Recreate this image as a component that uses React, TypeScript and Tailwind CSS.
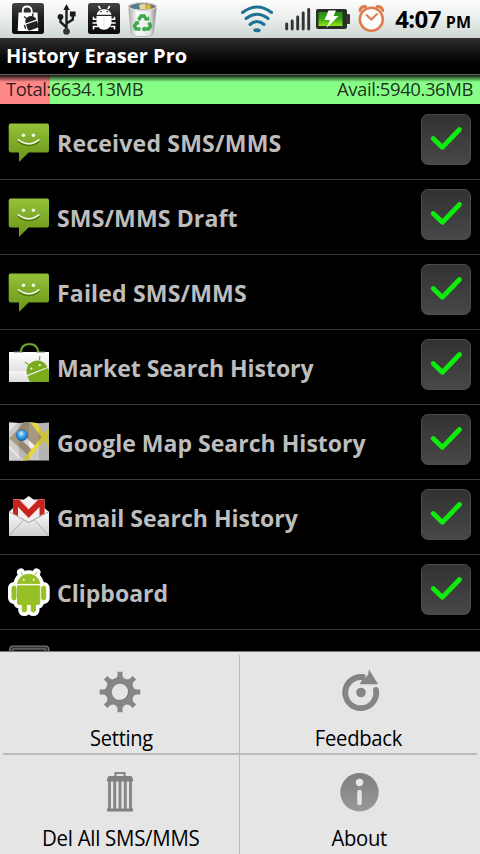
import { useState } from "react";
import type { ReactNode } from "react";
import clsx from "clsx";

const TOTAL = "6634.13MB";
const AVAIL = "5940.36MB";
const USED_PERCENT = 10.4;

const MessageIcon = () => (
  <svg viewBox="0 0 48 48" className="size-12 overflow-visible">
    <defs>
      <linearGradient id="bubble" x1="0" y1="0" x2="0" y2="1">
        <stop offset="0" stopColor="#93c23a" />
        <stop offset="1" stopColor="#6a9416" />
      </linearGradient>
    </defs>
    <path
      d="M6 4.5H42Q44 4.5 44 6.5V31.5Q44 33.5 42 33.5H23.5L14 43V33.5H6Q3.7 33.5 3.7 31.5V6.5Q3.7 4.5 6 4.5Z"
      fill="url(#bubble)"
    />
    <path d="M13 22.2Q24 31 34.5 22.2" fill="none" stroke="#4f7510" strokeWidth="1.5" />
    <path d="M13.5 20.8Q24 28.6 33.8 20.8" fill="none" stroke="#f4f7ea" strokeWidth="1.6" strokeLinecap="round" />
    <circle cx="18.5" cy="16.3" r="1.7" fill="#f4fae4" />
    <circle cx="28.4" cy="16.3" r="1.7" fill="#f4fae4" />
  </svg>
);

const MarketIcon = () => (
  <svg viewBox="0 0 48 48" className="size-12 overflow-visible">
    <defs>
      <linearGradient id="bag" x1="0" y1="0" x2="0" y2="1">
        <stop offset="0" stopColor="#fff" />
        <stop offset="0.62" stopColor="#e3e3e6" />
        <stop offset="0.64" stopColor="#f4f4f4" />
        <stop offset="1" stopColor="#dcdcdc" />
      </linearGradient>
      <clipPath id="bag-clip">
        <path d="M4 8H44V38H4Z" />
      </clipPath>
    </defs>
    <path d="M15.5 8C16.5 2 20 0 24.5 0S32.5 2 33.5 8" fill="none" stroke="#3c6a12" strokeWidth="2.4" />
    <path d="M15.5 8C16.5 2 20 0 24.5 0S32.5 2 33.5 8" fill="none" stroke="#86b93a" strokeWidth="1.1" />
    <path d="M4 8H44V38H4Z" fill="url(#bag)" />
    <path d="M9 8h9M31 8h9" stroke="#777" strokeWidth="1" />
    <g clipPath="url(#bag-clip)">
      <g transform="translate(32.3 27) rotate(-22)" fill="#79ab1c">
        <path d="M-11 0A11 10.5 0 0 1 11 0Z" />
        <path d="M-6-9L-8-13M6-9L8-13" stroke="#79ab1c" strokeWidth="1.2" />
        <path d="M-11 1.3H11V20H-11Z" />
        <rect x="12.2" y="1.5" width="4" height="12" rx="2" />
        <circle cx="-4.5" cy="-4.5" r="1" fill="#fff" />
        <circle cx="4.5" cy="-4.5" r="1" fill="#fff" />
      </g>
    </g>
  </svg>
);

const MapIcon = () => (
  <svg viewBox="0 0 48 48" className="size-12">
    <defs>
      <clipPath id="map-clip">
        <path d="M4 3.5L14 4L24 3.2L34 4.2L44 3.5V41.5H4Z" />
      </clipPath>
      <radialGradient id="pin" cx="0.45" cy="0.35" r="0.65">
        <stop offset="0" stopColor="#d6f2ff" />
        <stop offset="0.4" stopColor="#4fb2f0" />
        <stop offset="1" stopColor="#0a62b4" />
      </radialGradient>
    </defs>
    <g clipPath="url(#map-clip)">
      <path d="M4 3H44V42H4Z" fill="#cbc9c7" />
      <path d="M4 20L19 3H27L38 18L23 36L4 19Z" fill="#a8987f" />
      <path d="M4 22L21 38L17 42H4Z" fill="#d2d0ce" />
      <path d="M4 13L13 3H4Z" fill="#e2e2e2" />
      <path d="M19 20L31 31" stroke="#f0efec" strokeWidth="5" />
      <path d="M27 2L46 27M46 10L19 43" stroke="#e6d838" strokeWidth="4" fill="none" />
      <path d="M4 28L18 42" stroke="#e8e8e6" strokeWidth="2" />
      <path d="M14 3H24V42H14ZM34 3H44V42H34Z" fill="#000" opacity="0.1" />
    </g>
    <circle cx="16.8" cy="16.3" r="5.5" fill="url(#pin)" stroke="#1167b1" strokeWidth="0.7" />
  </svg>
);

const GmailIcon = () => (
  <svg viewBox="0 0 48 48" className="size-12">
    <defs>
      <linearGradient id="envelope" x1="0" y1="0" x2="0" y2="1">
        <stop offset="0" stopColor="#fafafa" />
        <stop offset="1" stopColor="#cfcfcf" />
      </linearGradient>
    </defs>
    <path d="M4 18L8 14V5.5H19L23.7 2L28.5 5.5H39.5V14L44 18V30H4Z" fill="#f3f0f0" />
    <path d="M4 17.5L23.7 28L44 17.5V42H4Z" fill="url(#envelope)" />
    <path d="M4.5 41.5L18.5 26M43.5 41.5L29.5 26" stroke="#a9a9a9" strokeWidth="0.9" />
    <path d="M4.5 18L23.7 28.5L43.5 18" fill="none" stroke="#999" strokeWidth="0.9" />
    <path d="M8 19.5V5.5H14L23.7 15.5L33.5 5.5H39.5V19.5L34.5 22V13L23.7 24L13 13V22Z" fill="#c9231e" />
    <path d="M8 5.5H14L23.7 15.5L33.5 5.5H39.5" fill="none" stroke="#e8655c" strokeWidth="0.8" />
  </svg>
);

const robotBody = (
  <>
    <path d="M12.5 14.8A11.2 10.5 0 0 1 34.8 14.8Z" />
    <path d="M17.5 6L16 3.5M30 6L31.5 3.5" strokeLinecap="round" />
    <path d="M12.5 16.5H34.8V34Q34.8 35.500 33 35.5H30.5V41Q30.5 43 28.3 43T26.2 41V35.5H21.5V41Q21.5 43 19.3 43T17.2 41V35.5H14.5Q12.5 35.5 12.5 34Z" />
    <rect x="7" y="17" width="4" height="14" rx="2" />
    <rect x="36.7" y="17" width="4" height="14" rx="2" />
  </>
);

const RobotIcon = () => (
  <svg viewBox="0 0 48 48" className="size-12 overflow-visible">
    <g fill="#fff" stroke="#fff" strokeWidth="8" strokeLinejoin="round">
      {robotBody}
    </g>
    <g fill="#97c024" stroke="#97c024" strokeWidth="1">
      {robotBody}
    </g>
    <path d="M12 15.7H35.3" stroke="#fff" strokeWidth="1.2" />
    <circle cx="18.8" cy="10.8" r="1" fill="#fff" />
    <circle cx="28.6" cy="10.8" r="1" fill="#fff" />
  </svg>
);

const LogIcon = () => (
  <svg viewBox="0 0 48 48" className="size-12">
    <rect x="4.7" y="2.200" width="39" height="38" rx="3" fill="#333" stroke="#777" strokeWidth="1.3" />
    <rect x="8" y="5" width="32" height="30" fill="#111" stroke="#888" />
  </svg>
);

const items = [
  { label: "Received SMS/MMS", icon: <MessageIcon />, tracking: "tracking-[0.2px]" },
  { label: "SMS/MMS Draft", icon: <MessageIcon />, tracking: "tracking-[0.12px]" },
  { label: "Failed SMS/MMS", icon: <MessageIcon />, tracking: "tracking-[0.17px]" },
  { label: "Market Search History", icon: <MarketIcon />, tracking: "tracking-[-0.05px]" },
  { label: "Google Map Search History", icon: <MapIcon />, tracking: "tracking-normal" },
  { label: "Gmail Search History", icon: <GmailIcon />, tracking: "tracking-normal" },
  { label: "Clipboard", icon: <RobotIcon />, tracking: "tracking-normal" },
];

const StatusBar = () => (
  <header className="flex h-[38px] shrink-0 items-center justify-between bg-linear-to-b from-[#fdfefe] via-[#e9edeb] to-[#ced7d3] pl-3 pr-[9px]">
    <div className="flex items-center">
      {/* market */}
      <svg viewBox="12 0 32 38" className="h-[38px] w-8">
        <defs>
          <linearGradient id="tile" x1="0" y1="0" x2="0" y2="1">
            <stop offset="0" stopColor="#444" />
            <stop offset="0.5" stopColor="#1c1c1c" />
            <stop offset="1" stopColor="#0a0a0a" />
          </linearGradient>
        </defs>
        <rect x="12" y="3" width="32" height="31" rx="2.5" fill="url(#tile)" />
        <path d="M22.800 13V10.500Q22.800 6.500 27 6.500T31.700 10.500V13" fill="none" stroke="#fff" strokeWidth="1.8" />
        <path d="M18.500 12.500H37.500L38.300 31H17.700Z" fill="#fff" />
        <g transform="translate(31 21.500) rotate(-20)" fill="#222">
          <path d="M-5.800 0A5.800 5.500 0 0 1 5.800 0ZM-5.800 1.200H5.800V6.500Q5.800 8 4 8H-4Q-5.800 8-5.800 6.500Z" />
          <path d="M-3-4L-4.800-7M3-4L4.800-7M-7.500 1V5M7.500 1V5" stroke="#222" strokeWidth="1.300" />
        </g>
      </svg>
      {/* usb */}
      <svg viewBox="57 0 20 38" className="ml-[13px] h-[38px] w-5">
        <path d="M66.500 32V9M66.500 27.500L60.500 22V17M66.500 23.500L72.800 19.500V14.500" fill="none" stroke="#1c1c1c" strokeWidth="2.400" />
        <path d="M66.500 4L63.300 10H69.700ZM69.900 11.500H75.600V16.500H69.900Z" fill="#1c1c1c" />
        <circle cx="60.500" cy="16.800" r="2.900" fill="#1c1c1c" />
        <circle cx="66.500" cy="31.500" r="3.300" fill="#333" />
      </svg>
      {/* debugging */}
      <svg viewBox="88 0 32 38" className="ml-[11px] h-[38px] w-8">
        <rect x="88" y="3" width="32" height="31" rx="2.5" fill="url(#tile)" />
        <g fill="#fff">
          <path d="M96.500 14.700A7.700 7.200 0 0 1 111.500 14.700ZM96.500 16H111.500V22A7.500 7.800 0 0 1 96.500 22Z" />
          <path
            d="M100.500 9L98.500 6M107.800 9L109.800 6M98 19.300H93.500V16.800M98 23H92.500M98 26.500H93.500V29.500M110.500 19.300H114.500V16.800M110.500 23H115.700M110.500 26.500H114.500V29.500"
            fill="none"
            stroke="#fff"
            strokeWidth="1.6"
          />
        </g>
        <path d="M104 17V29" stroke="#ccc" strokeWidth="0.500" />
        <circle cx="101" cy="11.600" r="0.800" fill="#222" />
        <circle cx="107.200" cy="11.600" r="0.800" fill="#222" />
      </svg>
      {/* recycle bin */}
      <svg viewBox="127 0 31 38" className="ml-[7px] h-[38px] w-[31px]">
        <defs>
          <linearGradient id="bin" x1="0" y1="0" x2="1" y2="0">
            <stop offset="0" stopColor="#aaa" />
            <stop offset="0.3" stopColor="#fafafa" />
            <stop offset="0.75" stopColor="#e8e8e8" />
            <stop offset="1" stopColor="#888" />
          </linearGradient>
        </defs>
        <path d="M128.500 6L131 33Q133 36.500 142.500 36.500T153.500 33L156.500 6Z" fill="url(#bin)" stroke="#999" strokeWidth="0.5" />
        <ellipse cx="142.500" cy="6.500" rx="14" ry="3.800" fill="#777" stroke="#d8d8d8" strokeWidth="1.2" />
        <path d="M133 5L138 3.500L140 9L134 9Z" fill="#4d8294" />
        <path d="M139 5L145 3.500L146 9.500L140 9.500Z" fill="#e4d7a0" />
        <path d="M145 5L150 4L151 9L146 9.500Z" fill="#d9b83a" />
        <g fill="none" stroke="#3fa84c" strokeWidth="3.400">
          <path d="M138.500 20L141 16H144L146.500 19.500" />
          <path d="M149 22.500L150.500 26L148.500 29H143.500" />
          <path d="M140.500 29H136L134.500 26L137 22.500" />
        </g>
        <path d="M144.500 20.500L149.500 20.500L149 16ZM144.500 26L141.500 29L144.500 32ZM134 22L138.500 20.500L139.500 25Z" fill="#3fa84c" />
      </svg>
    </div>
    <div className="flex items-center">
      {/* wifi */}
      <svg viewBox="240 0 34 38" className="h-[38px] w-[34px]">
        <g fill="none" stroke="#1c7396" strokeWidth="3" strokeLinecap="round">
          <path d="M242.500 12.500Q257 1.500 271.500 12.500" />
          <path d="M246 18.500Q257 10 268 18.500" />
          <path d="M250 24.500Q257 18.500 264 24.500" />
        </g>
        <ellipse cx="257" cy="30.200" rx="3.600" ry="2" fill="#1c7396" />
      </svg>
      {/* signal */}
      <svg viewBox="284 0 27 38" className="ml-2.5 h-[38px] w-[27px]">
        <path
          d="M286.700 24V29M292.200 21V29M297.700 17V29M303.200 13V29M308.700 9.500V29"
          stroke="#333"
          strokeWidth="2.9"
          strokeLinecap="round"
        />
      </svg>
      {/* battery */}
      <svg viewBox="316 0 34 38" className="ml-[5px] h-[38px] w-[34px]">
        <defs>
          <linearGradient id="charge" x1="0" y1="0" x2="0" y2="1">
            <stop offset="0" stopColor="#238a12" />
            <stop offset="0.5" stopColor="#3ba513" />
            <stop offset="1" stopColor="#8bea12" />
          </linearGradient>
        </defs>
        <rect x="316" y="9" width="31" height="20" rx="2" fill="#292e27" />
        <rect x="346" y="14" width="4" height="10" rx="1" fill="#333" />
        <rect x="318.500" y="12" width="24" height="14" fill="url(#charge)" />
        <path d="M328.500 10.500H336L333.500 16H338.500L326.500 28L330 20H324.500Z" fill="#fff" />
      </svg>
      {/* alarm */}
      <svg viewBox="357 0 29 38" className="ml-[7px] h-[38px] w-[29px]">
        <g fill="none" stroke="#dd7c4a" strokeLinecap="round">
          <circle cx="371.300" cy="19.300" r="11.500" fill="#fdfdfd" strokeWidth="2.500" />
          <path d="M360 10.500Q360.500 6.500 365.500 6.500M377 6.500Q382 6.500 382.800 10.500" strokeWidth="3" />
          <path d="M366.500 15L371.300 19.500L377 14" strokeWidth="2" />
        </g>
      </svg>
      <p className="ml-[9px] flex items-baseline font-bold text-black">
        <span className="text-2xl/6 tracking-[-0.6px]">4:07</span>
        <span className="ml-[5px] text-base/4">PM</span>
      </p>
    </div>
  </header>
);

const StorageBar = () => (
  <div className="relative h-[30px] shrink-0 bg-[#87ff87]">
    <div className="absolute inset-y-0 left-0 bg-[#ff8787]" style={{ width: `${USED_PERCENT}%` }} />
    <div className="absolute inset-x-0 top-0 h-2 border-t border-[#666] bg-linear-to-b from-black/90 to-transparent" />
    <div className="relative flex justify-between pl-1.5 pr-[7px] pt-[3px] text-[18.5px] leading-6 text-[#111]/90">
      <span className="tracking-[-0.5px]">Total:{TOTAL}</span>
      <span className="tracking-[-0.42px]">Avail:{AVAIL}</span>
    </div>
  </div>
);

type RowProps = {
  label: string;
  icon: ReactNode;
  tracking: string;
};

const Row = ({ label, icon, tracking }: RowProps) => {
  const [checked, setChecked] = useState(true);

  return (
    <li className="flex h-[75px] items-start border-b border-[#3a3a3a] pl-[5px] pr-[9px]">
      <div className="mt-3.5">{icon}</div>
      <span
        className={clsx(
          "ml-1 mt-[22px] grow origin-left scale-x-96 whitespace-nowrap text-2xl/8 font-bold text-[#bdbdbd]",
          tracking
        )}
      >
        {label}
      </span>
      <button
        type="button"
        aria-label={label}
        onClick={() => setChecked(!checked)}
        className="mt-[9px] h-[51px] w-[50px] shrink-0 rounded-[7px] border border-[#4c4c4c] bg-linear-to-b from-[#323232] to-[#484848]"
      >
        {checked && (
          <svg viewBox="1 1 48 49" className="h-[49px] w-12">
            <path
              d="M12.2 24.500L21.300 33.300L38.500 15.500"
              fill="none"
              stroke="#0eec0e"
              strokeWidth="4.800"
              strokeLinecap="round"
              strokeLinejoin="round"
            />
          </svg>
        )}
      </button>
    </li>
  );
};

const GearIcon = () => (
  <svg viewBox="-23 -24 48 48" className="size-12">
    <g fill="#868686">
      {[0, 45, 90, 135, 180, 225, 270, 315].map((angle) => (
        <path key={angle} d="M-4.8-12L-2.5-16V-20.3H2.5V-16L4.8-12Z" transform={`rotate(${angle})`} />
      ))}
    </g>
    <circle r="11.2" fill="none" stroke="#868686" strokeWidth="6" />
    <path d="M-14-2A14 14 0 0 1 0-14" fill="none" stroke="#777" strokeWidth="0.8" />
    <path d="M-1 8.300A8.300 8.300 0 0 0 8.300-1" fill="none" stroke="#6a6a6a" strokeWidth="0.8" />
  </svg>
);

const FeedbackIcon = () => (
  <svg viewBox="-24 -24 48 48" className="size-12">
    <path
      d="M17-2A15.500 15.500 0 1 1 6-14.200"
      fill="none"
      stroke="#858585"
      strokeWidth="5.800"
    />
    <circle cx="17" cy="-2" r="2.900" fill="#858585" />
    <path d="M10-22.500L19.200-7.700H0.500Q2-11.500 5-13L9-17Z" fill="#858585" />
    <circle cx="2" cy="0.500" r="4.800" fill="#858585" />
    <path d="M-15.500 4A18 18 0 0 1 6-17" fill="none" stroke="#717171" strokeWidth="0.8" />
  </svg>
);

const TrashIcon = () => (
  <svg viewBox="-23 -24 48 48" className="size-12">
    <path d="M-4.5-15.5V-19H4.5V-15.5" fill="none" stroke="#858585" strokeWidth="2.2" />
    <path d="M-11.5-16H11.5L13-13V-10.500H-13V-13Z" fill="#808080" />
    <path d="M-10.5-11V17M-5.300-11V17M0-11V17M5.300-11V17M10.5-11V17" stroke="#868686" strokeWidth="2.900" />
    <path d="M-13 16.500H13V19.500H-13Z" fill="#808080" />
  </svg>
);

const AboutIcon = () => (
  <svg viewBox="-24 -24 48 48" className="size-12">
    <defs>
      <linearGradient id="about" x1="0" y1="0" x2="0" y2="1">
        <stop offset="0" stopColor="#7f7f7f" />
        <stop offset="1" stopColor="#999" />
      </linearGradient>
    </defs>
    <circle cx="0.5" cy="0.3" r="19.2" fill="url(#about)" />
    <circle cx="0.5" cy="-9.5" r="3.7" fill="#e6e6e6" />
    <path d="M0.500 0V11" stroke="#e6e6e6" strokeWidth="4.500" strokeLinecap="round" />
  </svg>
);

const menu = [
  { label: "Setting", icon: <GearIcon />, style: "border-r border-b-2 ml-[3px]", text: "scale-x-91" },
  { label: "Feedback", icon: <FeedbackIcon />, style: "border-b-2 mr-[3px]", text: "scale-x-92" },
  { label: "Del All SMS/MMS", icon: <TrashIcon />, style: "border-r ml-[3px]", text: "scale-x-93" },
  { label: "About", icon: <AboutIcon />, style: "mr-[3px]", text: "translate-x-px scale-x-92" },
];

const OptionsMenu = () => (
  <nav className="grid h-[203px] shrink-0 grid-cols-2 grid-rows-[100px_100px] border-t border-[#777] bg-[#e5e5e5] pt-[3px]">
    {menu.map(({ label, icon, style, text }) => (
      <button key={label} type="button" className={clsx("flex flex-col items-center border-[#b9bcba] pt-[13px]", style)}>
        {icon}
        <span className={clsx("mt-[7px] whitespace-nowrap text-[22px] leading-7 tracking-[-0.3px] text-black", text)}>
          {label}
        </span>
      </button>
    ))}
  </nav>
);

export default function App() {
  return (
    <div className="flex h-[854px] w-[480px] flex-col overflow-hidden bg-black font-['Open_Sans','Noto_Sans',sans-serif]">
      <StatusBar />
      <h1 className="h-9 shrink-0 bg-linear-to-b from-[#303030] to-black pl-1.5 text-xl/9 font-bold tracking-[0.04px] text-white">
        History Eraser Pro
      </h1>
      <StorageBar />
      <ul className="min-h-0 grow overflow-hidden pt-px">
        {items.map((item) => (
          <Row key={item.label} {...item} />
        ))}
        <li className="pl-[5px] pt-3.5">
          <LogIcon />
        </li>
      </ul>
      <OptionsMenu />
    </div>
  );
}
